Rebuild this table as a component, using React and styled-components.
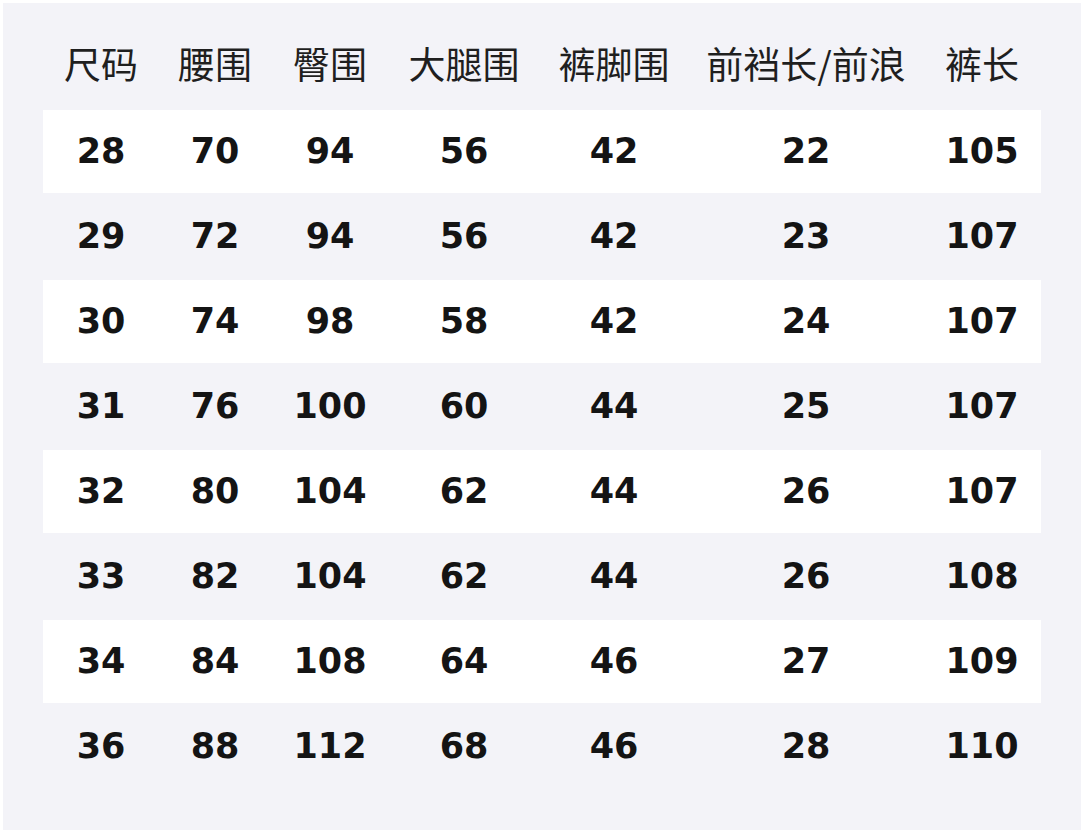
import React from "react";
import styled, { createGlobalStyle } from "styled-components";

const Global = createGlobalStyle`
  html, body { margin: 0; padding: 0; background: #ffffff; }
  #root { width: 1084px; height: 833px; }
`;

const Panel = styled.div`
  box-sizing: border-box;
  margin: 3px;
  width: 1078px;
  height: 827px;
  background: #f3f3f8;
  padding: 28px 40px 0 40px;
`;

const cols = "116px 112px 118px 150px 150px 234px 118px";

const HeaderRow = styled.div`
  display: grid;
  grid-template-columns: ${cols};
  height: 65px;
  align-items: center;
  margin-bottom: 14px;
`;

const HeadCell = styled.div`
  text-align: center;
  font-family: "Noto Sans CJK SC", "Noto Sans", sans-serif;
  font-size: 37px;
  font-weight: 400;
  color: #1f1f1f;
  white-space: nowrap;
  line-height: 1;
`;

const Body = styled.div`
  display: flex;
  flex-direction: column;
  gap: 2px;
`;

const Row = styled.div`
  display: grid;
  grid-template-columns: ${cols};
  height: 83px;
  align-items: center;
  background: ${(p) => (p.$striped ? "#ffffff" : "transparent")};
`;

const Cell = styled.div`
  text-align: center;
  font-family: "DejaVu Sans", "Liberation Sans", sans-serif;
  font-weight: 700;
  font-size: 35px;
  color: #141414;
  line-height: 1;
`;

const headers = ["尺码", "腰围", "臀围", "大腿围", "裤脚围", "前裆长/前浪", "裤长"];
const rows = [
  [28, 70, 94, 56, 42, 22, 105],
  [29, 72, 94, 56, 42, 23, 107],
  [30, 74, 98, 58, 42, 24, 107],
  [31, 76, 100, 60, 44, 25, 107],
  [32, 80, 104, 62, 44, 26, 107],
  [33, 82, 104, 62, 44, 26, 108],
  [34, 84, 108, 64, 46, 27, 109],
  [36, 88, 112, 68, 46, 28, 110],
];

export default function App() {
  return (
    <>
      <Global />
      <Panel>
        <HeaderRow>
          {headers.map((h) => (
            <HeadCell key={h}>{h}</HeadCell>
          ))}
        </HeaderRow>
        <Body>
          {rows.map((r, i) => (
            <Row key={i} $striped={i % 2 === 0}>
              {r.map((v, j) => (
                <Cell key={j}>{v}</Cell>
              ))}
            </Row>
          ))}
        </Body>
      </Panel>
    </>
  );
}
